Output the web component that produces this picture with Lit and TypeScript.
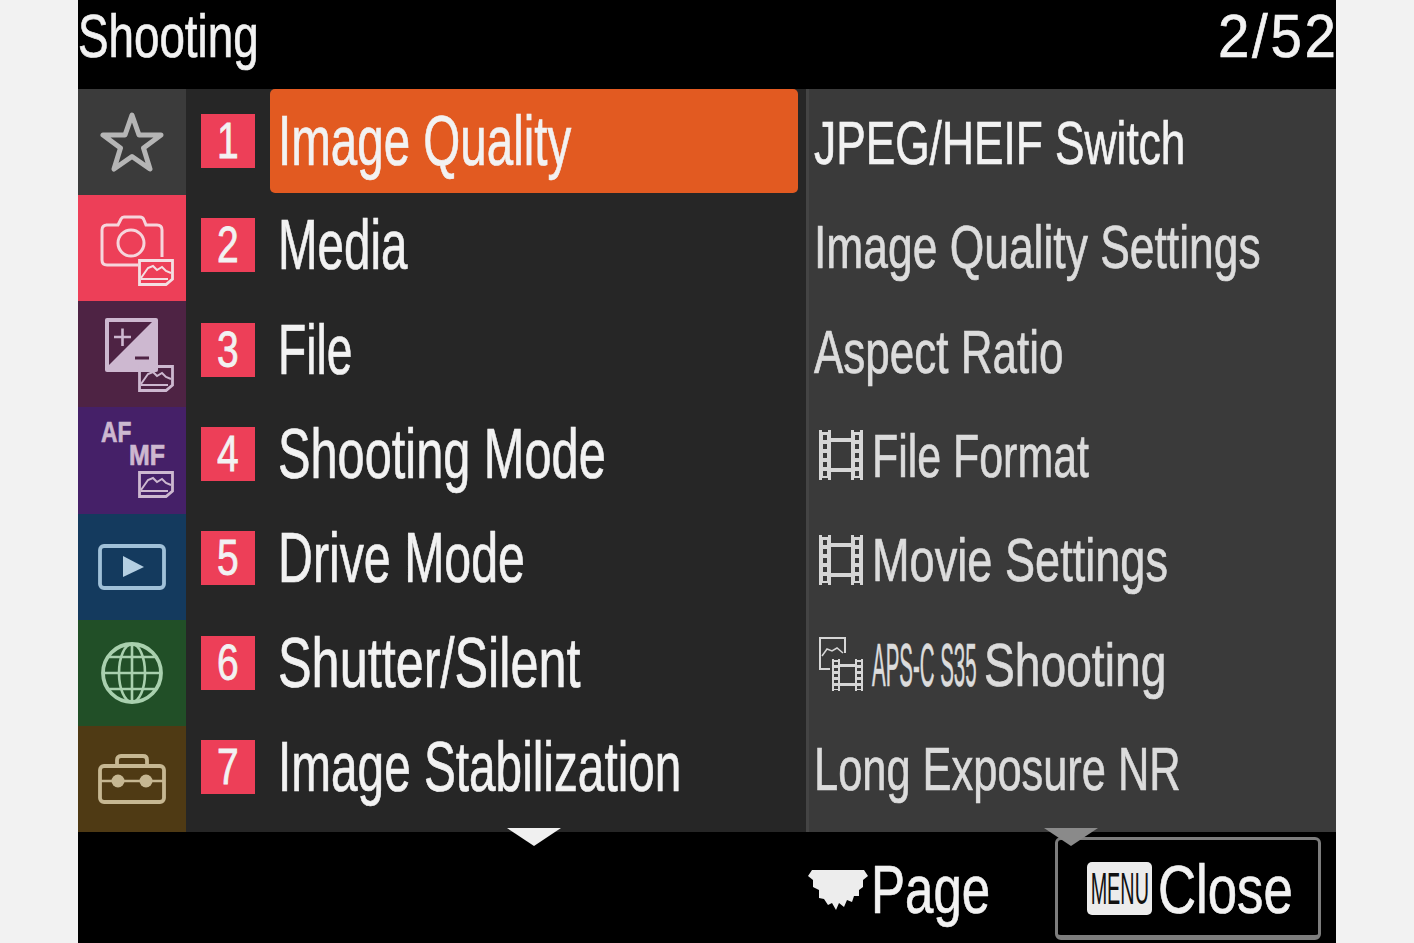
import { LitElement, html, css, svg } from "lit";
import { customElement } from "lit/decorators.js";

const thumbSvg = html`<svg class="thumb" viewBox="0 0 36 27"><g fill="none" stroke="currentColor"><path d="M1.500 1.500H34.500V20L28 25.500H1.500Z" stroke-width="2.800"/><path d="M3 19L10 9L15 7L19 11L24 8L28 12L33 14" stroke-width="2"/><path d="M3 20H30" stroke-width="2"/></g></svg>`;

const holes = (x: number, ys: number[], w: number, h: number) =>
  ys.map((y) => svg`<rect x="${x}" y="${y}" width="${w}" height="${h}" fill="#3a3a3a"/>`);
const film = html`<svg class="film" viewBox="0 0 44 50"><g fill="#d6d6d6"><path d="M0 0H3V2H9V0H12V50H9V48H3V50H0Z"/><path d="M32 0H35V2H41V0H44V50H41V48H35V50H32Z"/><rect x="12" y="8" width="20" height="4"/><rect x="12" y="38" width="20" height="4"/></g>${holes(4, [5, 14, 23, 32, 41], 4, 5)}${holes(36, [5, 14, 23, 32, 41], 4, 5)}</svg>`;

const rail = [
  { c: "star", i: html`<svg class="ic" style="width:64px;height:60px" viewBox="0 0 64 60"><path d="M32 3 L39 23 L61 23 L43.500 36 L50 57 L32 44.500 L14 57 L20.500 36 L3 23 L25 23Z" fill="none" stroke="#b5b5b5" stroke-width="5" stroke-linejoin="round"/></svg>` },
  { c: "cam", i: html`<div class="wrap"><svg class="ic abs c" viewBox="0 0 64 52"><g fill="none" stroke="#f6d5dc" stroke-width="3"><path d="M6 10H18L21 4Q22 2 24 2H40Q43 2 44 5L46 10H57Q62 10 62 15V42M38 50H7Q2 50 2 45V15Q2 10 7 10"/><circle cx="31" cy="28" r="13"/></g></svg>${thumbSvg}</div>` },
  { c: "exp", i: html`<div class="wrap"><svg class="ic abs e" viewBox="0 0 53 54"><path d="M2 0H51Q53 0 53 2V52Q53 54 51 54H2Q0 54 0 52V2Q0 0 2 0Z" fill="#cdb8d0"/><path d="M4 4H47L4 47Z" fill="#4e2344"/><path d="M9 19H26M17.500 10.500V28" stroke="#cdb8d0" stroke-width="2.600" fill="none"/><path d="M30 40H44" stroke="#4e2344" stroke-width="3"/></svg>${thumbSvg}</div>` },
  { c: "af", i: html`<div class="wrap"><span class="af a">AF</span><span class="af m">MF</span>${thumbSvg}</div>` },
  { c: "play", i: html`<svg class="ic" style="width:68px;height:46px" viewBox="0 0 68 46"><rect x="2" y="2" width="64" height="42" rx="4" fill="none" stroke="#a0c0d8" stroke-width="3.800"/><path d="M25 12L46 23L25 33Z" fill="#b5cfe2"/></svg>` },
  { c: "globe", i: html`<svg class="ic" style="width:64px;height:64px" viewBox="0 0 64 64"><g fill="none" stroke="#a9d0ae"><circle cx="32" cy="32" r="29" stroke-width="3.800"/><ellipse cx="32" cy="32" rx="13" ry="29" stroke-width="2.600"/><path d="M32 3V61M3 32H61M8 16H56M8 48H56" stroke-width="2.600"/></g></svg>` },
  { c: "tool", i: html`<svg class="ic" style="width:68px;height:50px" viewBox="0 0 68 50"><g fill="none" stroke="#c6b792" stroke-width="3.800"><rect x="2" y="12" width="64" height="36" rx="4"/><path d="M19 12V6Q19 2 23 2H45Q49 2 49 6V12"/><path d="M2 27H66" stroke-width="2.400"/></g><circle cx="20" cy="27" r="6.500" fill="#c6b792"/><circle cx="48" cy="27" r="6.500" fill="#c6b792"/></svg>` },
];

const items: [string, number][] = [
  ["Image Quality", 0.679], ["Media", 0.679], ["File", 0.66], ["Shooting Mode", 0.696],
  ["Drive Mode", 0.69], ["Shutter/Silent", 0.72], ["Image Stabilization", 0.682],
];

const nar = (t: string, s: number) => html`<span class="narrow" style="transform:scaleX(${s})">${t}</span>`;

@customElement("app-root")
export class AppRoot extends LitElement {
  static styles = css`
    :host { display: block; width: 1414px; height: 943px; background: #f2f2f2; font-family: "Liberation Sans", Arial, sans-serif; overflow: hidden; }
    .screen { margin-left: 78px; width: 1258px; height: 943px; background: #000; display: flex; flex-direction: column; position: relative; color: #f2f2f2; }
    .narrow { display: inline-block; white-space: nowrap; transform-origin: left center; -webkit-text-stroke: .7px currentColor; }
    .head { height: 89px; flex: none; display: flex; justify-content: space-between; font-size: 62px; line-height: 71px; }
    .count { letter-spacing: 3px; margin-right: -3px; transform-origin: right center; }
    .main { height: 743px; flex: none; display: flex; background: #262626; }
    .rail { width: 108px; flex: none; display: grid; grid-template-rows: repeat(7, 1fr); }
    .rail > div { display: flex; align-items: center; justify-content: center; }
    .star { background: #3b3b3b; } .cam { background: #ed3f58; } .exp { background: #4e2344; }
    .af-c { background: #452068; } .play { background: #143a5e; } .globe { background: #214f27; } .tool { background: #4f3a14; }
    .wrap { position: relative; width: 66px; height: 80px; }
    .ic { display: block; }
    .abs { position: absolute; }
    .c { left: 1px; top: 7px; width: 64px; height: 52px; }
    .e { left: 6px; top: 4px; width: 53px; height: 54px; }
    .thumb { position: absolute; width: 36px; height: 27px; left: 39px; top: 51px; display: block; color: #f3dfe3; }
    .exp .thumb, .af-c .thumb { color: #cdb8d0; }
    .af { position: absolute; font-weight: 700; font-size: 30px; line-height: 30px; color: #cdb8d0; transform-origin: left; -webkit-text-stroke: .7px currentColor; }
    .af.a { left: 2px; top: -3px; transform: scaleX(.76); }
    .af.m { left: 30px; top: 20px; transform: scaleX(.83); }
    .menu { width: 620px; flex: none; display: grid; grid-template-rows: repeat(7, 1fr); grid-template-columns: minmax(0, 1fr); font-size: 70px; padding-bottom: 13px; box-sizing: border-box; }
    .row { display: flex; align-items: center; padding-left: 15px; min-width: 0; }
    .num { width: 54px; height: 54px; flex: none; background: #ed3f58; display: flex; align-items: center; justify-content: center; font-size: 50px; }
    .num span { display: inline-block; transform: scaleX(.78); -webkit-text-stroke: .8px currentColor; }
    .label { flex: 1; min-width: 0; margin: 0 8px 0 15px; height: 104px; border-radius: 5px; padding-left: 8px; display: flex; align-items: center; }
    .sel { background: #e25a21; }
    .sub { flex: 1; min-width: 0; overflow: hidden; display: grid; grid-template-rows: repeat(7, 1fr); grid-template-columns: minmax(0, 1fr); background: #3a3a3a; border-left: 3px solid #444; padding-bottom: 13px; box-sizing: border-box; font-size: 62px; color: #dcdcdc; }
    .subrow { display: flex; align-items: center; padding-left: 5px; margin-top: 3px; min-width: 0; }
    .subrow.first { color: #f2f2f2; }
    .film { width: 44px; height: 50px; margin-left: 5px; margin-right: 9px; flex: none; display: block; }
    .crop { width: 44px; height: 54px; margin-left: 5px; margin-right: 9px; flex: none; display: block; color: #d6d6d6; }
    .aps { font-size: 62px; width: 112px; flex: none; }
    .foot { flex: 1; display: flex; justify-content: flex-end; align-items: flex-start; font-size: 68px; padding: 5px 15px 0 0; }
    .page { display: flex; align-items: center; width: 247px; height: 103px; }
    .scallop { width: 60px; height: 40px; flex: none; display: block; margin-right: 3px; margin-top: 2px; }
    .close { width: 266px; height: 103px; box-sizing: border-box; border: 3px solid #7d7d7d; border-bottom-width: 5px; border-radius: 6px; display: flex; align-items: center; padding: 2px 0 0 29px; }
    .menuk { width: 65px; height: 53px; flex: none; border-radius: 5px; background: #ececec; color: #111; font-size: 44px; display: flex; align-items: center; justify-content: center; overflow: hidden; margin-right: 6px; }
    .menuk span { display: inline-block; transform: scaleX(.45); }
    .tri { position: absolute; width: 0; height: 0; border-left: 27px solid transparent; border-right: 27px solid transparent; top: 828px; }
    .t1 { left: 429px; border-top: 18px solid #f0f0f0; }
    .t2 { left: 966px; border-top: 18px solid #8a8a8a; }
  `;
  render() {
    const subs = [
      nar("JPEG/HEIF Switch", 0.714),
      nar("Image Quality Settings", 0.716),
      nar("Aspect Ratio", 0.71),
      html`${film}${nar("File Format", 0.692)}`,
      html`${film}${nar("Movie Settings", 0.728)}`,
      html`<svg class="crop" viewBox="0 0 44 54"><g fill="none" stroke="#d6d6d6"><path d="M11 32H1V1H26V16" stroke-width="2"/><path d="M3 19L8 12L13 14L18 11L24 16" stroke-width="1.500"/></g><g fill="#d6d6d6"><path d="M13 22H15V23H19V22H21V54H19V53H15V54H13Z"/><path d="M36 22H38V23H42V22H44V54H42V53H38V54H36Z"/><rect x="21" y="27" width="15" height="3"/><rect x="21" y="46" width="15" height="3"/></g>${holes(15, [25, 31, 37, 43, 49], 4, 3)}${holes(38, [25, 31, 37, 43, 49], 4, 3)}</svg><span class="narrow aps" style="transform:scaleX(.33)">APS-C S35</span>${nar("Shooting", 0.745)}`,
      nar("Long Exposure NR", 0.7),
    ];
    return html`<div class="screen">
      <div class="head">${nar("Shooting", 0.738)}<span class="narrow count" style="transform:scaleX(.91)">2/52</span></div>
      <div class="main">
        <div class="rail">${rail.map((r) => html`<div class="${r.c === "af" ? "af-c" : r.c}">${r.i}</div>`)}</div>
        <div class="menu">${items.map(([t, s], i) => html`<div class="row"><div class="num"><span>${i + 1}</span></div><div class="label ${i === 0 ? "sel" : ""}">${nar(t, s)}</div></div>`)}</div>
        <div class="sub">${subs.map((s, i) => html`<div class="subrow ${i === 0 ? "first" : ""}">${s}</div>`)}</div>
      </div>
      <div class="foot">
        <div class="page"><svg class="scallop" viewBox="0 0 60 40"><path d="M4 0H56L60 6L55 10V17L51 20V26L46 26L44 32L39 30L36 37L31 33L28 40L24 33L20 35L16 29L11 28V20L5 17V10L0 6Z" fill="#ededed"/></svg>${nar("Page", 0.75)}</div>
        <div class="close"><div class="menuk"><span>MENU</span></div>${nar("Close", 0.775)}</div>
      </div>
      <div class="tri t1"></div><div class="tri t2"></div>
    </div>`;
  }
}
